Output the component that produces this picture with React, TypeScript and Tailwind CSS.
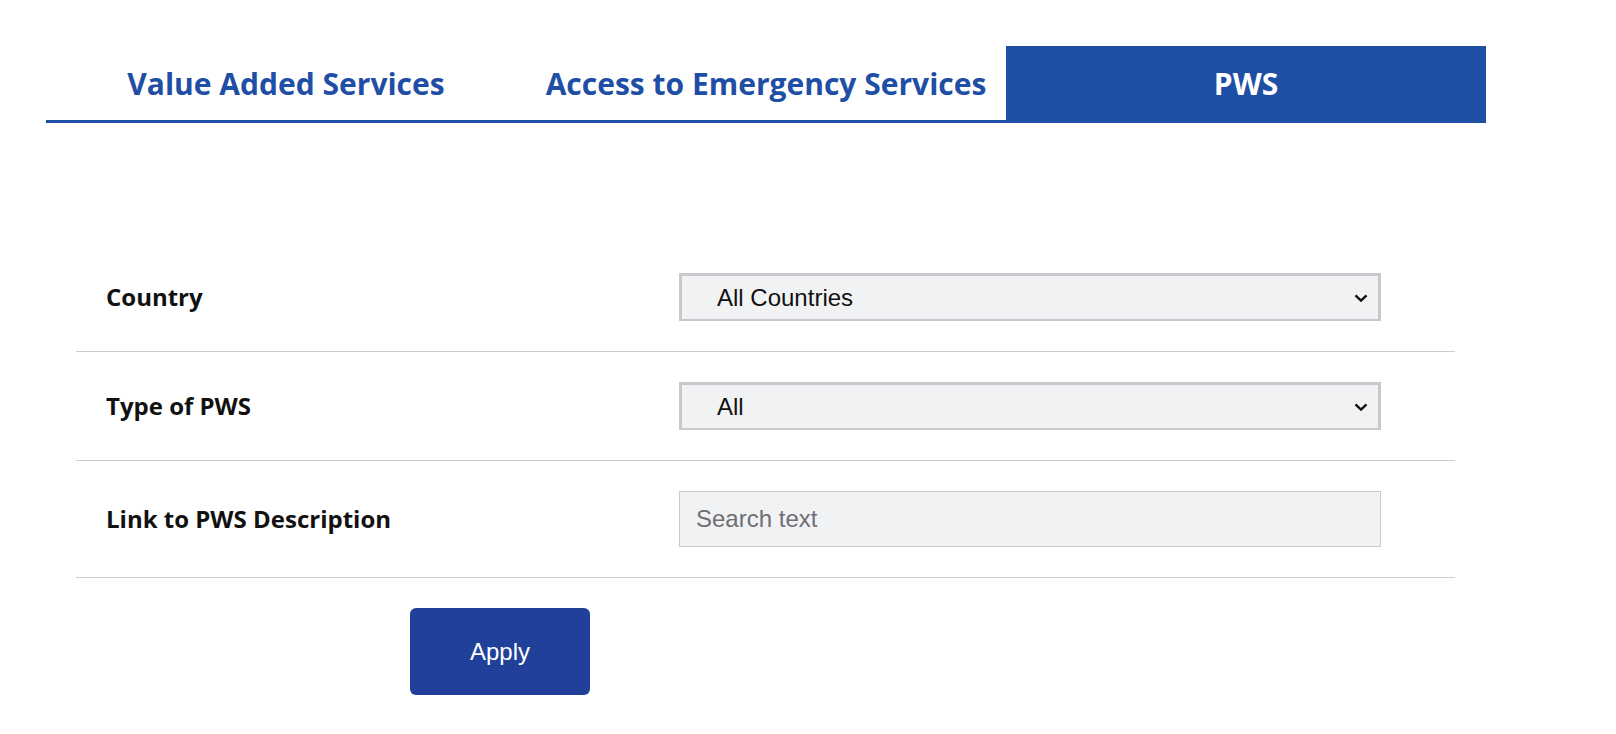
const tabs = ["Value Added Services", "Access to Emergency Services", "PWS"]

function Chevron() {
  return (
    <svg
      className="pointer-events-none absolute right-[10px] top-1/2 -translate-y-1/2"
      width="14"
      height="9"
      viewBox="0 0 14 9"
      fill="none"
    >
      <path d="M1.5 1.8 7 7 12.5 1.8" stroke="#111" strokeWidth="2.4" />
    </svg>
  )
}

function SelectBox({ value }: { value: string }) {
  return (
    <div className="relative h-[48px] w-[702px] border-x-[3px] border-t-[3px] border-b-2 border-[#c8c8cd] bg-[#f1f2f4]">
      <div className="flex h-full items-center pl-[35px] font-['Liberation_Sans',Arial,sans-serif] text-[24px] text-[#111]">
        {value}
      </div>
      <Chevron />
    </div>
  )
}

export default function App() {
  return (
    <main className="min-h-[734px] bg-white pt-[46px] font-['Open_Sans',sans-serif]">
      <nav className="ml-[46px] flex w-[1440px] border-b-[3px] border-[#1f4fa5]">
        {tabs.map((t, i) => (
          <div
            key={t}
            className={
              i === 2
                ? "flex h-[74px] flex-1 items-center justify-center bg-[#1f4fa5] text-[30px] font-bold text-white"
                : "flex h-[74px] flex-1 items-center justify-center text-[30px] font-bold text-[#1f4fa5]"
            }
          >
            {t}
          </div>
        ))}
      </nav>

      <section className="ml-[76px] mt-[120px] w-[1379px]">
        <div className="flex items-center border-b border-[#cbcbd3] py-[30px]">
          <label className="w-[603px] pl-[30px] text-[24px] font-bold text-[#111]">
            Country
          </label>
          <SelectBox value="All Countries" />
        </div>
        <div className="flex items-center border-b border-[#cbcbd3] py-[30px]">
          <label className="w-[603px] pl-[30px] text-[24px] font-bold text-[#111]">
            Type of PWS
          </label>
          <SelectBox value="All" />
        </div>
        <div className="flex items-center border-b border-[#cbcbd3] py-[30px]">
          <label className="w-[603px] pl-[30px] text-[24px] font-bold text-[#111]">
            Link to PWS Description
          </label>
          <input
            placeholder="Search text"
            className="h-[56px] w-[702px] border border-[#c8c8cd] bg-[#f1f2f4] px-[16px] font-['Liberation_Sans',Arial,sans-serif] text-[24px] text-[#111] placeholder:text-[#6f6f73] outline-none"
          />
        </div>

        <button className="ml-[334px] mt-[30px] h-[87px] w-[180px] rounded-[6px] bg-[#21409a] font-['Liberation_Sans',Arial,sans-serif] text-[24px] text-white">
          Apply
        </button>
      </section>
    </main>
  )
}
